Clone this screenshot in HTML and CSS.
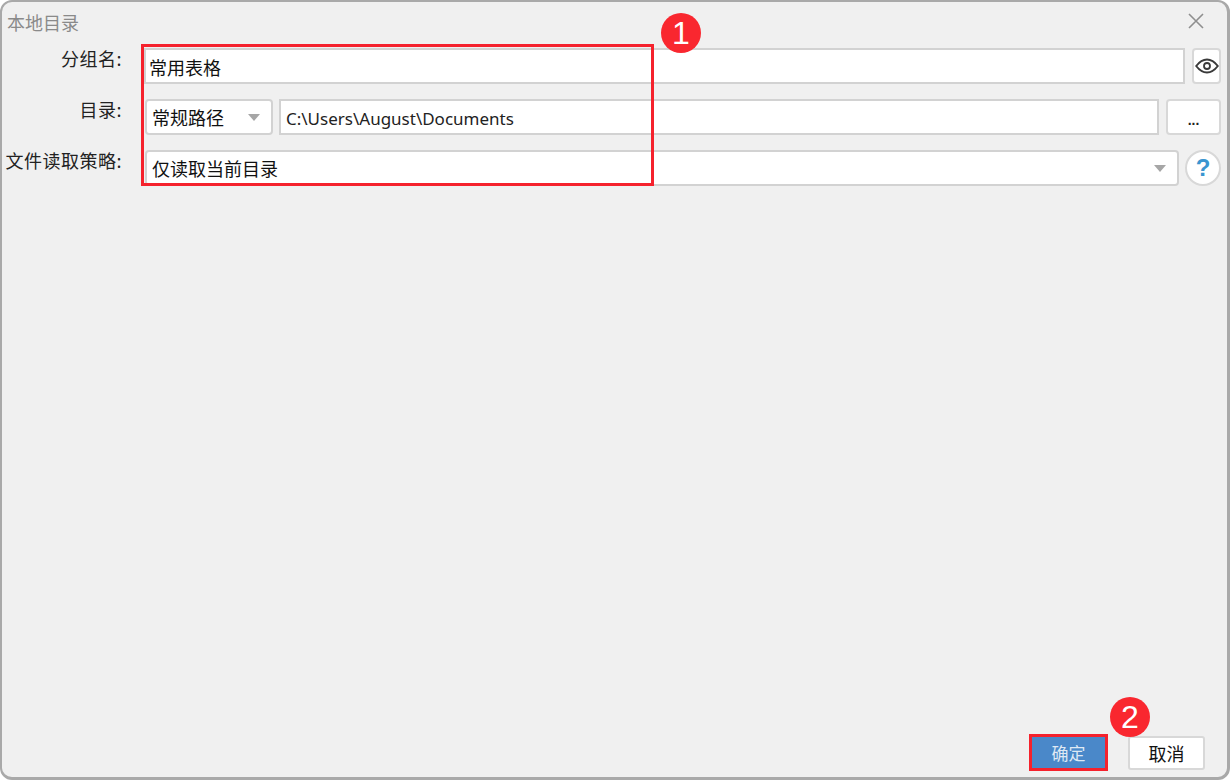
FILE: index.html
```html
<!DOCTYPE html>
<html lang="zh-CN">
<head>
<meta charset="utf-8">
<title>本地目录</title>
<link rel="stylesheet" href="styles.css">
</head>
<body>
<div class="window">
  <header class="titlebar">
    <span class="title">本地目录</span>
    <svg class="close" width="18" height="18" viewBox="0 0 18 18"><path d="M2 2L16 16M16 2L2 16" stroke="#8f8f8f" stroke-width="1.6" fill="none"/></svg>
  </header>
  <main class="form">
    <div class="row">
      <label class="label">分组名:</label>
      <div class="field input grow name">常用表格</div>
      <button class="btn eye">
        <svg width="24" height="16" viewBox="0 0 24 16"><path d="M1.2 8C5 3 8.500 1.500 12 1.500S19 3 22.800 8C19 13 15.500 14.500 12 14.500S5 13 1.200 8Z" fill="none" stroke="#3a3a3a" stroke-width="1.900"/><circle cx="12" cy="8" r="3" fill="none" stroke="#3a3a3a" stroke-width="1.800"/></svg>
      </button>
    </div>
    <div class="row">
      <label class="label">目录:</label>
      <div class="field select path-type"><span>常规路径</span><i class="caret"></i></div>
      <div class="field input grow path">C:\Users\August\Documents</div>
      <button class="btn more">...</button>
    </div>
    <div class="row">
      <label class="label">文件读取策略:</label>
      <div class="field select grow policy"><span>仅读取当前目录</span><i class="caret"></i></div>
      <button class="help">?</button>
    </div>
  </main>
  <footer class="footer">
    <button class="action ok">确定</button>
    <button class="action cancel">取消</button>
  </footer>
</div>
<div class="mark mark-form"></div>
<div class="mark mark-ok"></div>
<div class="badge badge-1">1</div>
<div class="badge badge-2">2</div>
</body>
</html>
```

FILE: styles.css
```css
* { box-sizing: border-box; }
html, body { margin: 0; height: 100%; }
body {
  position: relative;
  width: 1230px;
  height: 780px;
  overflow: hidden;
  background: #fff;
  font-family: "Noto Sans CJK SC", "Liberation Sans", sans-serif;
  color: #222;
}
.window {
  height: 780px;
  display: flex;
  flex-direction: column;
  background: #f0f0f0;
  border: solid #a9a9a9;
  border-width: 2px 3px 3px 2px;
  border-radius: 12px;
}
.titlebar {
  height: 36px;
  flex: none;
  display: flex;
  align-items: center;
  justify-content: space-between;
  padding: 4px 22px 0 5px;
}
.title { font-size: 18px; color: #8a8a8a; }
.close { margin-bottom: 3px; }
.form {
  display: flex;
  flex-direction: column;
  gap: 15px;
  padding: 10px 6px 0 0;
}
.row {
  height: 36px;
  display: flex;
  gap: 6px;
}
.label {
  width: 130px;
  flex: none;
  padding-right: 10px;
  font-size: 18px;
  line-height: 20px;
  letter-spacing: 0.5px;
  text-align: right;
  white-space: nowrap;
}
.field {
  display: flex;
  align-items: center;
  background: #fff;
  border: 2px solid #d2d2d2;
  font-size: 18px;
  color: #111;
  min-width: 0;
}
.grow { flex: 1; }
.input { padding: 0 3px; }
.name { padding-top: 1px; margin-left: 6px; margin-right: 1px; }
.path { padding: 2px 5px 0; font-size: 17px; font-family: "Noto Sans", "Noto Sans CJK SC", sans-serif; color: #222; }
.select {
  justify-content: space-between;
  border-radius: 4px;
  padding: 0 11px 0 5px;
}
.path-type { width: 128px; flex: none; margin-left: 7px; }
.policy { margin-left: 7px; }
.caret {
  width: 0; height: 0;
  border-left: 6px solid transparent;
  border-right: 6px solid transparent;
  border-top: 7px solid #a6a6a6;
}
.btn {
  background: #fff;
  border: 2px solid #d8d8d8;
  border-radius: 4px;
  padding: 0;
  font-family: "Liberation Sans", sans-serif;
  color: #222;
}
.eye { width: 29px; display: flex; align-items: center; justify-content: center; }
.more { width: 55px; font-size: 14px; font-weight: bold; padding-top: 6px; margin-left: 1px; }
.help {
  width: 36px;
  height: 36px;
  flex: none;
  padding: 0;
  border-radius: 50%;
  background: #fff;
  border: 2px solid #d8d8d8;
  color: #3a95d0;
  font: bold 24px "Liberation Sans", sans-serif;
}
.footer {
  margin-top: auto;
  display: flex;
  justify-content: flex-end;
  align-items: center;
  gap: 20px;
  padding: 0 22px 6px 0;
}
.action {
  height: 34px;
  padding: 0;
  border-radius: 3px;
  font-family: "Noto Sans CJK SC", sans-serif;
  font-size: 18px;
}
.ok {
  width: 79px;
  height: 37px;
  background: #4a88c9;
  border: 0;
  color: #dfe9f4;
  font-size: 17px;
}
.cancel {
  width: 77px;
  background: #fff;
  border: 2px solid #d8d8d8;
  color: #111;
}
.mark {
  position: absolute;
  border: 3px solid #f5222d;
  pointer-events: none;
}
.mark-form { left: 141px; top: 44px; width: 513px; height: 142px; }
.mark-ok { left: 1029px; top: 734px; width: 79px; height: 37px; }
.badge {
  position: absolute;
  width: 40px;
  height: 40px;
  border-radius: 50%;
  background: #f9272f;
  color: #fff;
  font: 32px/41px "Liberation Sans", sans-serif;
  text-align: center;
}
.badge-1 { left: 661px; top: 13px; }
.badge-2 { left: 1110px; top: 697px; }
```
